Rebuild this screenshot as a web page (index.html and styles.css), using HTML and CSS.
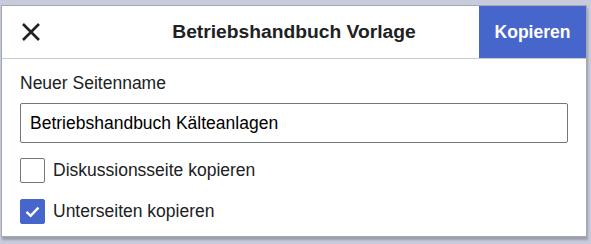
FILE: index.html
```html
<!DOCTYPE html>
<html lang="de">
<head>
<meta charset="utf-8">
<title>Betriebshandbuch Vorlage</title>
<link rel="stylesheet" href="styles.css">
</head>
<body>
<div class="dialog">
  <header class="head">
    <div class="head-left">
      <button class="close" aria-label="Schließen">
        <svg width="20" height="20" viewBox="0 0 20 20"><path d="M2 2 L18 18 M18 2 L2 18" stroke="#202122" stroke-width="2.6" fill="none"/></svg>
      </button>
    </div>
    <h1 class="title">Betriebshandbuch Vorlage</h1>
    <button class="primary">Kopieren</button>
  </header>
  <div class="body">
    <label class="field-label" for="name">Neuer Seitenname</label>
    <input class="text-input" id="name" type="text" value="Betriebshandbuch Kälteanlagen">
    <label class="check">
      <span class="box"></span>
      <span class="check-text">Diskussionsseite kopieren</span>
    </label>
    <label class="check">
      <span class="box checked">
        <svg width="25" height="25" viewBox="0 0 25 25"><path d="M6.5 12.8 L10.6 16.8 L18.5 8.6" stroke="#fff" stroke-width="2.4" fill="none"/></svg>
      </span>
      <span class="check-text">Unterseiten kopieren</span>
    </label>
  </div>
</div>
</body>
</html>
```
FILE: styles.css
```css
html, body {
  margin: 0;
  padding: 0;
}
body {
  background: #c8cbdb;
  font-family: "Liberation Sans", Arial, sans-serif;
  color: #202122;
  height: 244px;
  overflow: hidden;
}
.dialog {
  margin: 5px 0 0 1px;
  width: 584px;
  background: #fff;
  border: 1px solid #a2a9b1;
  box-shadow: 1px 3px 2px rgba(0, 0, 0, 0.22);
}
.head {
  display: grid;
  grid-template-columns: 107px 1fr 107px;
  height: 52px;
  border-bottom: 1px solid #c8ccd1;
  align-items: center;
}
.head-left {
  display: flex;
  align-items: center;
  height: 100%;
}
.close {
  border: 0;
  background: none;
  padding: 0;
  margin-left: 19px;
  width: 20px;
  height: 20px;
  display: flex;
}
.title {
  margin: 0;
  text-align: center;
  font-size: 19.25px;
  font-weight: bold;
  line-height: 24px;
  color: #202122;
}
.primary {
  height: 100%;
  border: 0;
  margin: 0;
  background: #4766cc;
  color: #fff;
  font-family: "Liberation Sans", Arial, sans-serif;
  font-size: 17.5px;
  font-weight: bold;
  padding: 0;
}
.body {
  display: flex;
  flex-direction: column;
  padding: 13px 18px 12px 18px;
}
.field-label {
  font-size: 17.5px;
  line-height: 22px;
  color: #202122;
}
.text-input {
  margin: 9px 0 0 0;
  box-sizing: border-box;
  height: 40px;
  width: 100%;
  border: 1px solid #72777d;
  border-radius: 2px;
  padding: 0 9px;
  font-family: "Liberation Sans", Arial, sans-serif;
  font-size: 17.5px;
  color: #000;
  line-height: 22px;
  outline: none;
}
.check {
  display: flex;
  align-items: center;
  gap: 8px;
  margin-top: 15px;
  font-size: 17.5px;
  line-height: 22px;
  color: #202122;
}
.check + .check {
  margin-top: 16px;
}
.box {
  box-sizing: border-box;
  width: 25px;
  height: 25px;
  border: 1px solid #72777d;
  border-radius: 2px;
  background: #fff;
  flex: none;
  display: flex;
}
.box.checked {
  background: #4766cc;
  border-color: #4766cc;
}
.box.checked svg {
  margin: -1px;
}
.check-text {
  margin-top: -2px;
}
```
